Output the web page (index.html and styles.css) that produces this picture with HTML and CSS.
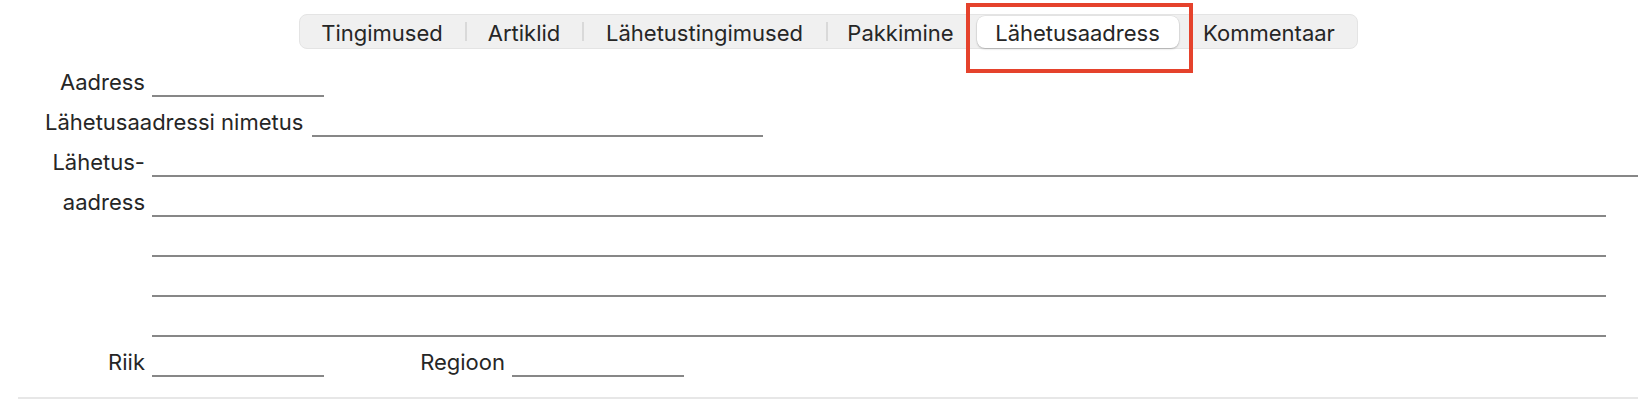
FILE: index.html
```html
<!DOCTYPE html>
<html lang="et">
<head>
<meta charset="utf-8">
<title>Lähetusaadress</title>
<link rel="stylesheet" href="styles.css">
</head>
<body>
<div class="page">
  <div class="tabs-row">
    <div class="tabs">
      <div class="seg seg1">Tingimused</div>
      <span class="sep"></span>
      <div class="seg seg2">Artiklid</div>
      <span class="sep"></span>
      <div class="seg seg3">Lähetustingimused</div>
      <span class="sep"></span>
      <div class="seg seg4">Pakkimine</div>
      <div class="seg seg5"><span class="selected">Lähetusaadress</span></div>
      <div class="seg seg6">Kommentaar</div>
    </div>
  </div>

  <div class="form">
    <div class="row">
      <span class="label">Aadress</span>
      <span class="field short"></span>
    </div>
    <div class="row">
      <span class="label auto">Lähetusaadressi nimetus</span>
      <span class="field name"></span>
    </div>
    <div class="row">
      <span class="label">Lähetus-</span>
      <span class="field wide"></span>
    </div>
    <div class="row">
      <span class="label">aadress</span>
      <span class="field wide inset"></span>
    </div>
    <div class="row">
      <span class="label"></span>
      <span class="field wide inset"></span>
    </div>
    <div class="row">
      <span class="label"></span>
      <span class="field wide inset"></span>
    </div>
    <div class="row">
      <span class="label"></span>
      <span class="field wide inset"></span>
    </div>
    <div class="row">
      <span class="label">Riik</span>
      <span class="field short"></span>
      <span class="label region">Regioon</span>
      <span class="field short"></span>
    </div>
  </div>

  <div class="divider"></div>

  <div class="highlight"></div>
</div>
</body>
</html>
```

FILE: styles.css
```css
html, body {
  margin: 0;
  padding: 0;
  background: #ffffff;
}

body {
  font-family: Inter, "Noto Sans", "Liberation Sans", sans-serif;
  color: #262626;
}

.page {
  position: relative;
  width: 1650px;
  height: 404px;
  box-sizing: border-box;
  padding: 14px 12px 0 18px;
}

.tabs-row {
  display: flex;
  justify-content: center;
}

.tabs {
  display: flex;
  align-items: center;
  height: 35px;
  box-sizing: border-box;
  border: 1px solid #e4e4e4;
  border-radius: 8px;
  background: #f0f0f0;
  font-size: 22px;
}

.seg {
  display: flex;
  align-items: center;
  justify-content: center;
  height: 100%;
  padding-top: 3px;
  box-sizing: border-box;
  white-space: nowrap;
}

.seg1 { width: 165px; }
.seg2 { width: 115px; }
.seg3 { width: 242px; }
.seg4 { width: 146px; }
.seg5 { width: 208px; padding-top: 0; }
.seg6 { width: 175px; }

.sep {
  width: 2px;
  height: 19px;
  background: #d9d9d9;
}

.selected {
  display: flex;
  align-items: center;
  justify-content: center;
  box-sizing: border-box;
  width: 202px;
  height: 32px;
  margin-top: 1px;
  padding-top: 2px;
  background: #ffffff;
  border-radius: 8px;
  box-shadow: 0 0 0 0.5px rgba(0, 0, 0, 0.08), 0 1px 2px rgba(0, 0, 0, 0.22);
}

.form {
  margin-top: 8px;
  font-size: 22px;
}

.row {
  display: flex;
  align-items: flex-end;
  height: 40px;
}

.label {
  width: 127px;
  margin-right: 7px;
  text-align: right;
  white-space: nowrap;
  line-height: 22px;
  padding-bottom: 4px;
  flex: none;
}

.label.auto {
  width: auto;
  margin-left: 27px;
  margin-right: 9px;
}

.label.region {
  width: 181px;
}

.field {
  display: block;
  height: 2px;
  background: #878787;
  flex: none;
}

.field.short { width: 172px; }
.field.name { width: 451px; }
.field.wide { flex: 1; }
.field.inset { margin-right: 32px; }

.divider {
  margin-top: 20px;
  height: 2px;
  background: #e7e7e7;
}

.highlight {
  position: absolute;
  left: 966px;
  top: 3px;
  width: 227px;
  height: 70px;
  box-sizing: border-box;
  border: 4px solid #e5422c;
}
```
